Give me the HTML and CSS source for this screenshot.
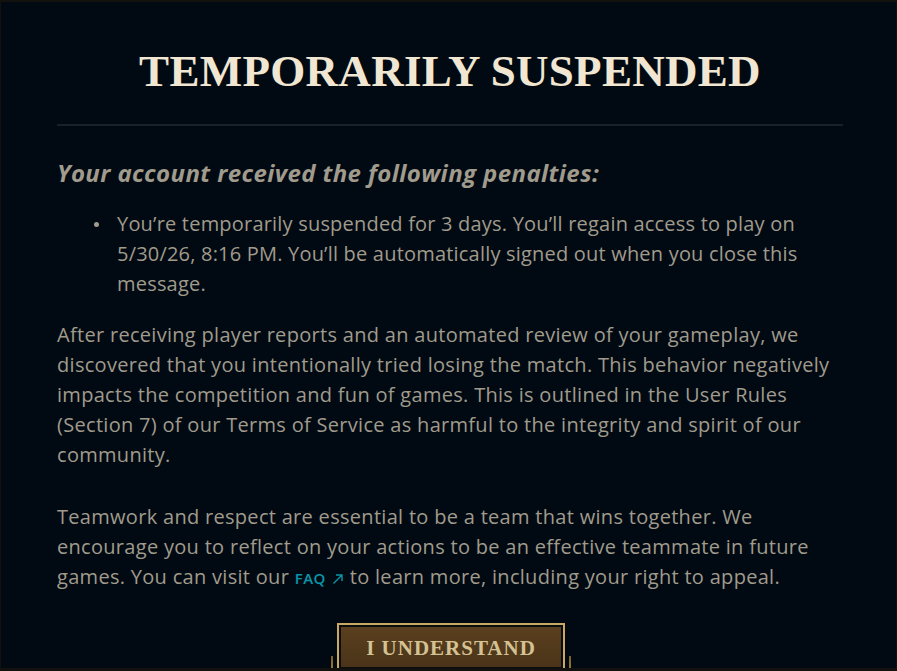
FILE: index.html
```html
<!DOCTYPE html>
<html>
<head>
<meta charset="utf-8">
<link rel="stylesheet" href="styles.css">
</head>
<body>
<div class="frame">
  <div class="modal">
    <h1 class="title">TEMPORARILY SUSPENDED</h1>
    <hr class="divider">
    <h2 class="subtitle">Your account received the following penalties:</h2>
    <ul class="penalties">
      <li>You’re temporarily suspended for 3 days. You’ll regain access to play on 5/30/26, 8:16 PM. You’ll be automatically signed out when you close this message.</li>
    </ul>
    <p class="para">After receiving player reports and an automated review of your gameplay, we discovered that you intentionally tried losing the match. This behavior negatively impacts the competition and fun of games. This is outlined in the User Rules (Section 7) of our Terms of Service as harmful to the integrity and spirit of our community.</p>
    <p class="para">Teamwork and respect are essential to be a team that wins together. We encourage you to reflect on your actions to be an effective teammate in future games. You can visit our <a class="faq" href="#">FAQ <svg class="arrow" width="12" height="12" viewBox="0 0 12 12"><path d="M1.5 10.5 L10 2 M4 2 H10 V8" fill="none" stroke="currentColor" stroke-width="1.4"/></svg></a> to learn more, including your right to appeal.</p>
    <div class="actions">
      <button class="btn"><span>I UNDERSTAND</span></button>
    </div>
  </div>
</div>
</body>
</html>
```

FILE: styles.css
```css
html, body {
  margin: 0;
  padding: 0;
  background: #010a13;
}
.frame {
  width: 897px;
  height: 671px;
  box-sizing: border-box;
  border-style: solid;
  border-color: #13110e;
  border-width: 2px 1px 3px 1px;
  overflow: hidden;
  background: #010a13;
}
.modal {
  padding: 0 53px 0 56px;
}
.title {
  margin: 0;
  padding-top: 47px;
  text-align: center;
  font-family: "Liberation Serif", serif;
  font-weight: 700;
  font-size: 45px;
  letter-spacing: 0.3px;
  line-height: 45px;
  color: #f0e6d2;
}
.divider {
  margin: 30px 0 0 0;
  border: 0;
  height: 2px;
  background: #1a2028;
}
.subtitle {
  margin: 32px 0 0 0;
  font-family: "Open Sans", sans-serif;
  font-style: italic;
  font-weight: 700;
  font-size: 24px;
  letter-spacing: 0.4px;
  line-height: 30px;
  color: #a09b8c;
}
.penalties {
  margin: 21px 0 0 0;
  padding-left: 60px;
  list-style: none;
  font-family: "Open Sans", sans-serif;
  font-size: 20px;
  letter-spacing: 0.2px;
  line-height: 30px;
  color: #a09b8c;
}
.penalties li {
  position: relative;
}
.penalties li::before {
  content: "";
  position: absolute;
  left: -23px;
  top: 13px;
  width: 5px;
  height: 5px;
  border-radius: 50%;
  background: #a09b8c;
}
.para {
  margin: 21px 0 0 0;
  font-family: "Open Sans", sans-serif;
  font-size: 20px;
  letter-spacing: 0.3px;
  line-height: 30px;
  color: #a09b8c;
}
.para + .para {
  margin-top: 32px;
}
.faq {
  color: #0a96aa;
  text-decoration: none;
  font-size: 15px;
  font-weight: 600;
  letter-spacing: 0.5px;
}
.arrow {
  vertical-align: -1px;
  margin-left: 2px;
}
.actions {
  display: flex;
  justify-content: center;
  margin-top: 30px;
}
.btn {
  position: relative;
  width: 228px;
  height: 48px;
  padding: 2px;
  margin-left: 2px;
  border: 2px solid #c8a961;
  background: #0a0d0f;
  cursor: pointer;
}
.btn span {
  display: block;
  height: 100%;
  padding-top: 9px;
  box-sizing: border-box;
  background: linear-gradient(#5b3f1e, #4a3419);
  font-family: "Liberation Serif", serif;
  font-weight: 700;
  font-size: 21px;
  letter-spacing: 1px;
  color: #d4c293;
}
.btn::before, .btn::after {
  content: "";
  position: absolute;
  top: 31px;
  width: 2px;
  height: 20px;
  background: linear-gradient(#7a5e2a, #b08a3c);
}
.btn::before { left: -8px; }
.btn::after { right: -8px; }
```
